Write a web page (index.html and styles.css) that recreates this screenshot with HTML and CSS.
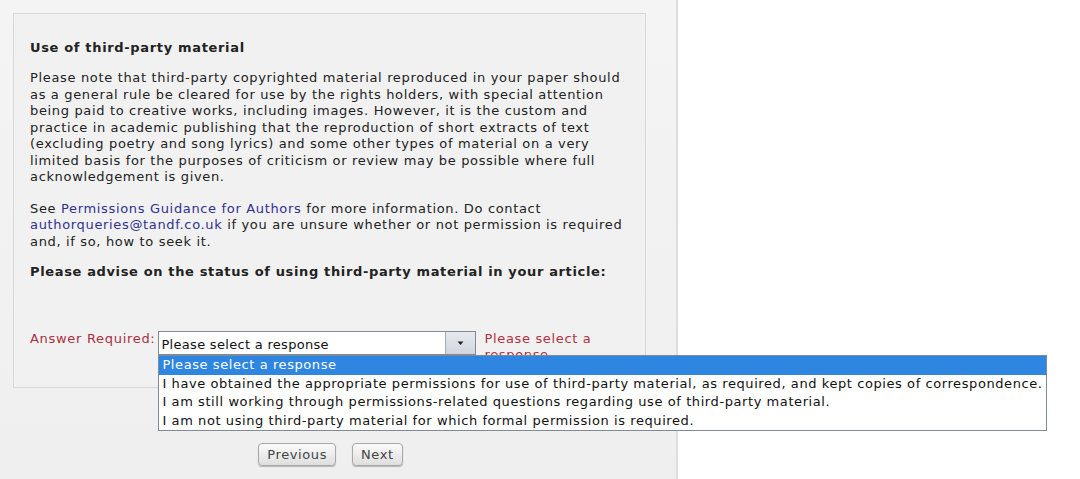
FILE: index.html
```html
<!DOCTYPE html>
<html>
<head>
<meta charset="utf-8">
<link rel="stylesheet" href="styles.css">
</head>
<body>
<div class="main">
  <div class="panel">
    <h3 class="title">Use of third-party material</h3>
    <p class="para para-first">Please note that third-party copyrighted material reproduced in your paper should<br>as a general rule be cleared for use by the rights holders, with special attention<br>being paid to creative works, including images. However, it is the custom and<br>practice in academic publishing that the reproduction of short extracts of text<br>(excluding poetry and song lyrics) and some other types of material on a very<br>limited basis for the purposes of criticism or review may be possible where full<br>acknowledgement is given.</p>
    <p class="para para-second">See <a class="link" href="#">Permissions Guidance for Authors</a> for more information. Do contact<br><a class="link" href="#">authorqueries@tandf.co.uk</a> if you are unsure whether or not permission is required<br>and, if so, how to seek it.</p>
    <p class="question">Please advise on the status of using third-party material in your article:</p>
    <div class="answer-row">
      <span class="req">Answer Required:</span>
      <div class="select-wrap">
        <div class="select">
          <span class="select-text">Please select a response</span>
          <span class="select-btn"><svg width="9" height="5" viewBox="0 0 9 5"><path d="M1.5 0.5 L7.5 0.5 L4.5 4 Z" fill="#222"/></svg></span>
        </div>
        <ul class="options">
          <li class="opt sel">Please select a response</li>
          <li class="opt">I have obtained the appropriate permissions for use of third-party material, as required, and kept copies of correspondence.</li>
          <li class="opt">I am still working through permissions-related questions regarding use of third-party material.</li>
          <li class="opt">I am not using third-party material for which formal permission is required.</li>
        </ul>
      </div>
      <span class="err">Please select a<br>response</span>
    </div>
  </div>
  <div class="buttons">
    <button class="btn btn-prev">Previous</button>
    <button class="btn btn-next">Next</button>
  </div>
</div>
</body>
</html>
```

FILE: styles.css
```css
html, body {
  margin: 0;
  padding: 0;
  background: #ffffff;
}
body {
  font-family: "DejaVu Sans", Verdana, sans-serif;
  font-size: 13px;
  letter-spacing: 0.66px;
  color: #222;
  display: flex;
}
.main {
  width: 678px;
  height: 479px;
  box-sizing: border-box;
  background: linear-gradient(#f4f4f4, #efefef);
  border-right: 2px solid #dedede;
  padding: 13px 0 0 13px;
}
.panel {
  width: 633px;
  height: 375px;
  box-sizing: border-box;
  border: 1px solid #d8d8d8;
  background: #f1f1f1;
  padding: 26px 0 0 16px;
}
.title {
  margin: 0 0 14px 0;
  font-size: 13px;
  font-weight: bold;
  line-height: 16px;
}
.para {
  margin: 0;
  line-height: 16.5px;
  white-space: nowrap;
}
.para-first {
  margin-bottom: 15px;
}
.para-second {
  margin-bottom: 13px;
}
.link {
  color: #303090;
  text-decoration: none;
}
.question {
  margin: 0;
  font-weight: bold;
  font-size: 13px;
  line-height: 18px;
  letter-spacing: 0.64px;
}
.answer-row {
  display: flex;
  align-items: flex-start;
  margin-top: 50px;
}
.req {
  color: #a83040;
  line-height: 16px;
  letter-spacing: 0.7px;
}
.select-wrap {
  position: relative;
  margin-left: 3px;
}
.select {
  width: 318px;
  height: 24px;
  box-sizing: border-box;
  border: 1px solid #7f8a99;
  background: #fff;
  display: flex;
  align-items: center;
}
.select-text {
  flex: 1;
  padding-left: 2px;
  padding-top: 2px;
  color: #111;
  letter-spacing: 0.3px;
}
.select-btn {
  width: 30px;
  height: 22px;
  box-sizing: border-box;
  border-left: 1px solid #a8aeb6;
  background: linear-gradient(#e6e9ed, #d2d6dc);
  display: flex;
  align-items: center;
  justify-content: center;
}
.options {
  position: absolute;
  left: 0;
  top: 24px;
  margin: 0;
  padding: 0;
  list-style: none;
  width: 889px;
  box-sizing: border-box;
  border: 1px solid #7f8a99;
  background: #fff;
  z-index: 2;
}
.opt {
  height: 18.5px;
  line-height: 18.5px;
  padding-left: 3px;
  white-space: nowrap;
  color: #111;
  letter-spacing: 0.58px;
}
.opt.sel {
  background: #2f86e0;
  color: #fff;
}
.err {
  color: #b03040;
  margin-left: 8px;
  line-height: 16px;
}
.buttons {
  display: flex;
  justify-content: center;
  gap: 16px;
  width: 633px;
  margin-top: 55px;
  padding-left: 1px;
}
.btn {
  font-family: "DejaVu Sans", Verdana, sans-serif;
  font-size: 13px;
  letter-spacing: 0.6px;
  color: #444;
  height: 23px;
  padding: 0 8px;
  border: 1px solid #a8a8a8;
  border-radius: 4px;
  background: linear-gradient(#fbfbfb, #dedede);
  box-shadow: 0 1px 1px rgba(0, 0, 0, 0.25);
}
```
